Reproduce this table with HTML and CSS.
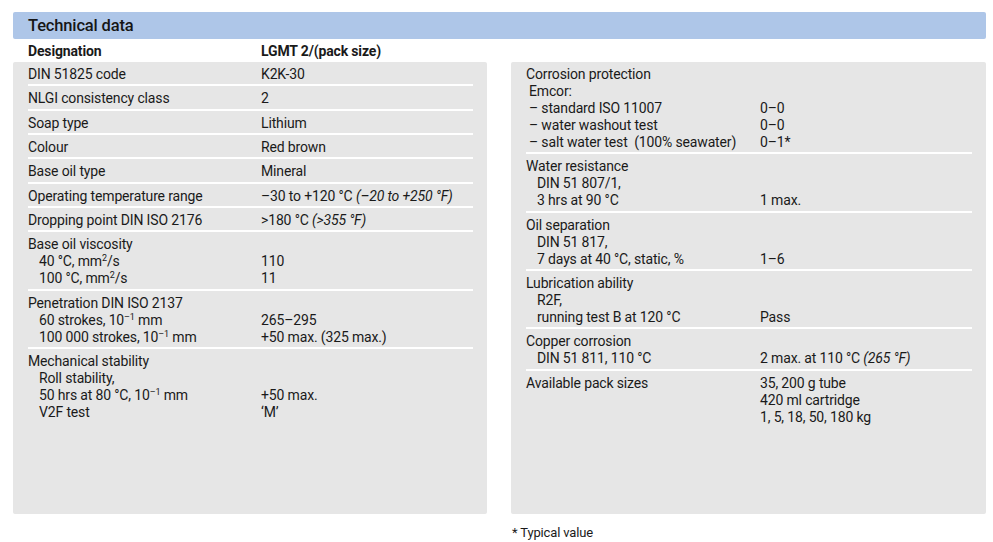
FILE: index.html
```html
<!DOCTYPE html>
<html lang="en">
<head>
<meta charset="utf-8">
<title>Technical data</title>
<link rel="stylesheet" href="styles.css">
</head>
<body>
<div class="sheet">
  <div class="title-bar">Technical data</div>
  <div class="designation">
    <span class="label">Designation</span>
    <span class="value">LGMT 2/(pack size)</span>
  </div>
  <div class="panels">
    <div class="panel">
      <div class="row"><div class="label">DIN 51825 code</div><div class="value">K2K-30</div></div>
      <div class="row"><div class="label">NLGI consistency class</div><div class="value">2</div></div>
      <div class="row"><div class="label">Soap type</div><div class="value">Lithium</div></div>
      <div class="row"><div class="label">Colour</div><div class="value">Red brown</div></div>
      <div class="row"><div class="label">Base oil type</div><div class="value">Mineral</div></div>
      <div class="row"><div class="label">Operating temperature range</div><div class="value">–30 to +120 °C <i>(–20 to +250 °F)</i></div></div>
      <div class="row"><div class="label">Dropping point DIN ISO 2176</div><div class="value">&gt;180 °C <i>(&gt;355 °F)</i></div></div>
      <div class="row">
        <div class="label">Base oil viscosity<span class="sub">40 °C, mm<sup>2</sup>/s</span><span class="sub">100 °C, mm<sup>2</sup>/s</span></div>
        <div class="value"><br>110<br>11</div>
      </div>
      <div class="row">
        <div class="label">Penetration DIN ISO 2137<span class="sub">60 strokes, 10<sup>–1</sup> mm</span><span class="sub">100 000 strokes, 10<sup>–1</sup> mm</span></div>
        <div class="value"><br>265–295<br>+50 max. (325 max.)</div>
      </div>
      <div class="row">
        <div class="label">Mechanical stability<span class="sub">Roll stability,</span><span class="sub">50 hrs at 80 °C, 10<sup>–1</sup> mm</span><span class="sub">V2F test</span></div>
        <div class="value"><br><br>+50 max.<br>‘M’</div>
      </div>
    </div>
    <div class="right-col">
      <div class="panel">
        <div class="row">
          <div class="label">Corrosion protection<span class="sub tight">Emcor:</span><span class="sub tight">– standard ISO 11007</span><span class="sub tight">– water washout test</span><span class="sub tight">– salt water test&nbsp; (100% seawater)</span></div>
          <div class="value"><br><br>0–0<br>0–0<br>0–1*</div>
        </div>
        <div class="row">
          <div class="label">Water resistance<span class="sub">DIN 51 807/1,</span><span class="sub">3 hrs at 90 °C</span></div>
          <div class="value"><br><br>1 max.</div>
        </div>
        <div class="row">
          <div class="label">Oil separation<span class="sub">DIN 51 817,</span><span class="sub">7 days at 40 °C, static, %</span></div>
          <div class="value"><br><br>1–6</div>
        </div>
        <div class="row">
          <div class="label">Lubrication ability<span class="sub">R2F,</span><span class="sub">running test B at 120 °C</span></div>
          <div class="value"><br><br>Pass</div>
        </div>
        <div class="row">
          <div class="label">Copper corrosion<span class="sub">DIN 51 811, 110 °C</span></div>
          <div class="value"><br>2 max. at 110 °C <i>(265 °F)</i></div>
        </div>
        <div class="row">
          <div class="label">Available pack sizes</div>
          <div class="value">35, 200 g tube<br>420 ml cartridge<br>1, 5, 18, 50, 180 kg</div>
        </div>
      </div>
      <div class="footnote">* Typical value</div>
    </div>
  </div>
</div>
</body>
</html>
```

FILE: styles.css
```css
html, body {
  margin: 0;
  padding: 0;
  background: #ffffff;
}

body {
  font-family: "Roboto", "Lato", sans-serif;
  color: #1a1a1a;
  font-size: 14px;
  line-height: 17px;
  letter-spacing: -0.15px;
}

.sheet {
  padding: 12px 0 0 13px;
  width: 973px;
}

.title-bar {
  background: #aec6e8;
  height: 27px;
  border-radius: 2px;
  padding-left: 15px;
  font-size: 16.5px;
  font-weight: 500;
  line-height: 28px;
  color: #161616;
}

.designation {
  display: grid;
  grid-template-columns: 233px 1fr;
  padding: 4px 0 0 15px;
  height: 19px;
  font-weight: 700;
  line-height: 17px;
}

.panels {
  display: grid;
  grid-template-columns: 474px 475px;
  column-gap: 24px;
}

.panel {
  background: #e6e6e6;
  border-radius: 2px;
  padding: 0 14px 0 15px;
  height: 452px;
  box-sizing: border-box;
}

.right-col {
  display: flex;
  flex-direction: column;
}

.row {
  display: grid;
  grid-template-columns: 233px 1fr;
  padding: 4px 0 1.33px;
  border-bottom: 2px solid #ffffff;
}

.row:last-child {
  border-bottom: none;
}

.right-col .row {
  grid-template-columns: 234px 1fr;
}

.sub {
  display: block;
  padding-left: 11px;
}

.sub.tight {
  padding-left: 3px;
}

sup {
  font-size: 9px;
  line-height: 0;
  vertical-align: 5px;
}

.footnote {
  font-size: 13px;
  margin-top: 10px;
  padding-left: 1px;
}
```
